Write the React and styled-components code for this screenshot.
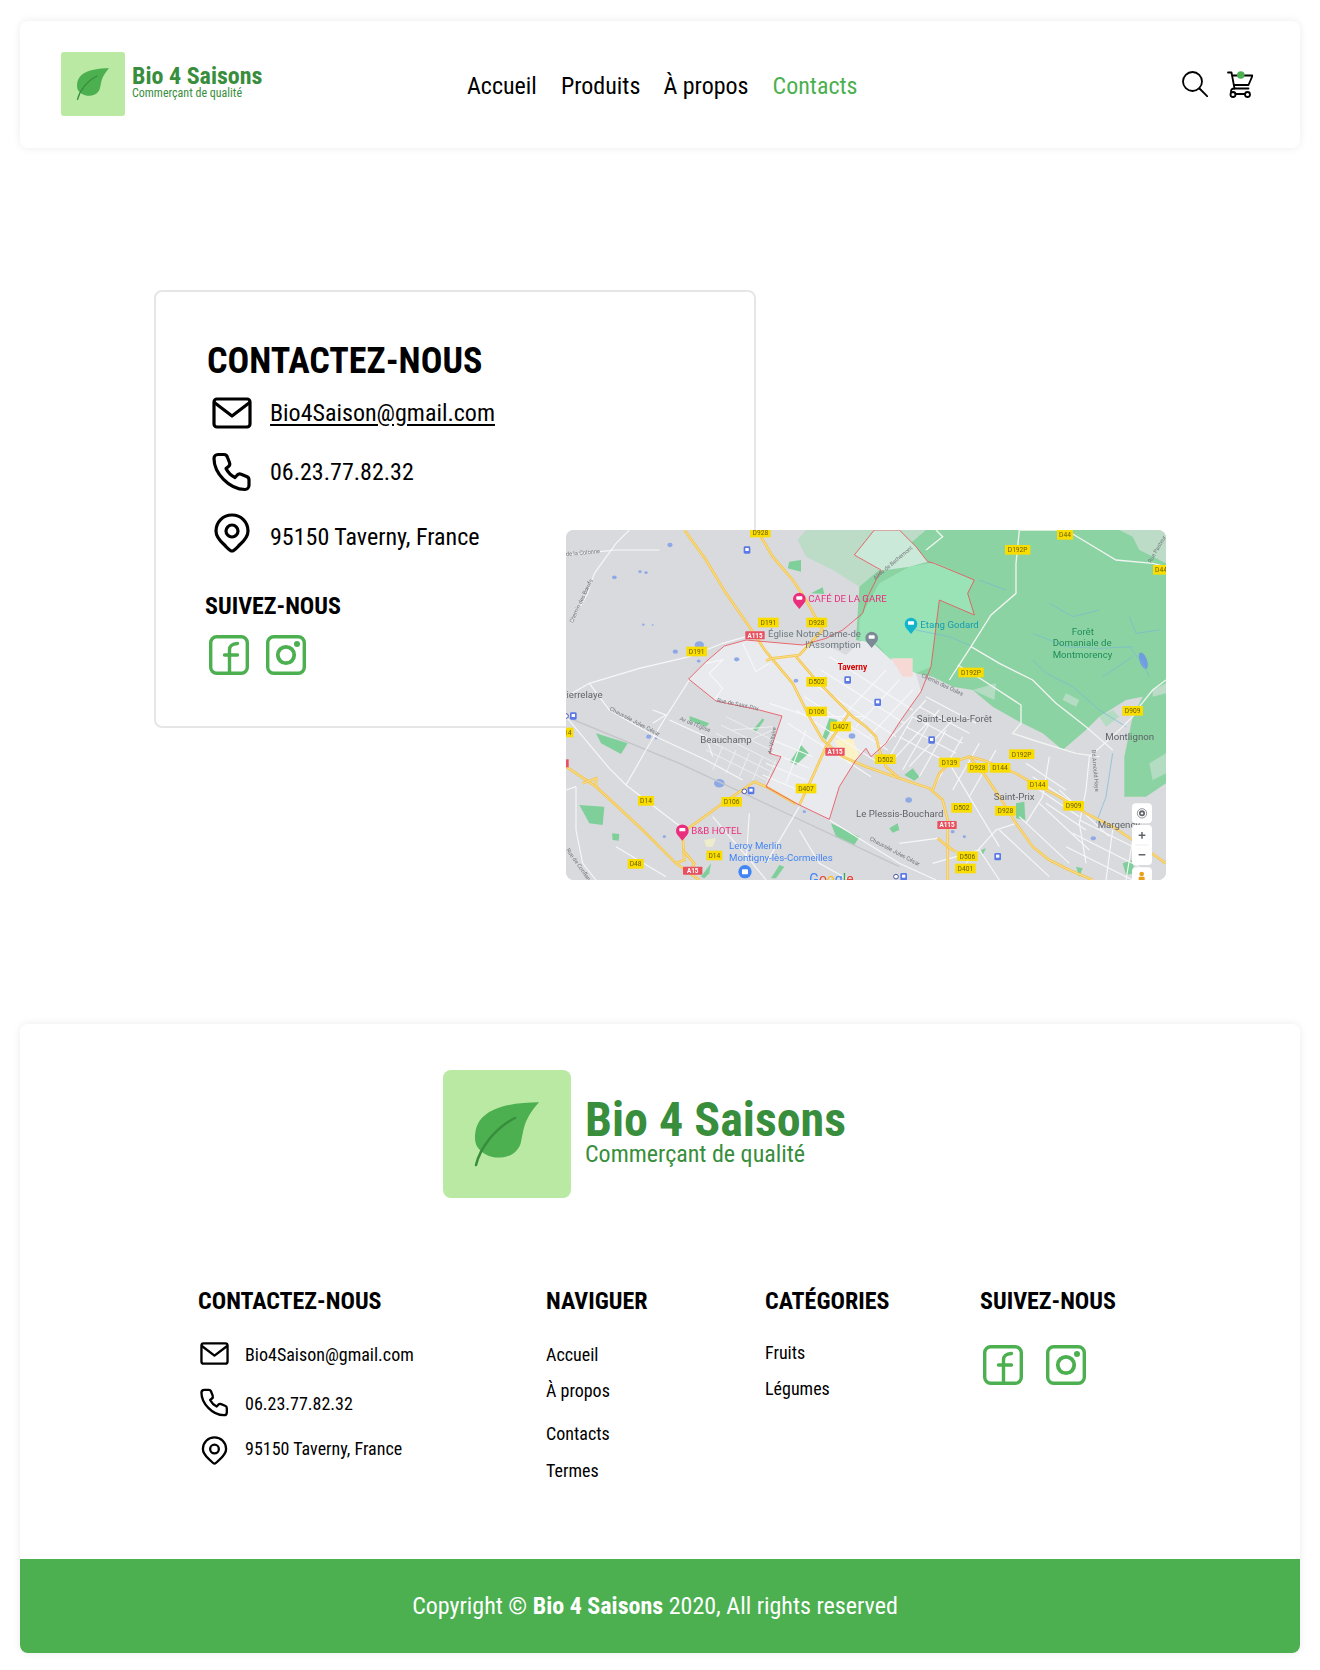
import React from "react";
import styled, { createGlobalStyle } from "styled-components";

const Global = createGlobalStyle`
  html, body { margin: 0; padding: 0; background: #fff; }
  body { font-family: "Roboto Condensed", Roboto, "Liberation Sans", sans-serif; font-stretch: 75%; color: #000; }
  * { box-sizing: border-box; }
`;

const Page = styled.div`
  width: 1320px;
  height: 1670px;
  padding: 21px 20px 0;
`;
const Card = styled.div`
  background: #fff;
  border-radius: 8px;
  box-shadow: 0 0 8px rgba(0, 0, 0, 0.08);
`;
const Header = styled(Card)`
  height: 127px;
  padding: 31px 47px 0 41px;
  display: flex;
  align-items: flex-start;
`;
const Brand = styled.div`
  display: flex;
  align-items: ${p => (p.$big ? "flex-start" : "center")};
  gap: ${p => (p.$big ? 14 : 7)}px;
  width: ${p => (p.$big ? "auto" : "406px")};
`;
const Tile = styled.div`
  width: ${p => p.$size}px;
  height: ${p => p.$size}px;
  background: #b9e9a3;
  border-radius: ${p => (p.$size > 100 ? 8 : 3)}px;
  flex: none;
`;
const BrandText = styled.div`
  color: #388e3c;
  display: flex;
  flex-direction: column;
  padding-top: ${p => (p.$big ? 28 : 0)}px;
  margin-top: ${p => (p.$big ? 0 : -4)}px;
`;
const BrandName = styled.div`
  font-weight: 700;
  font-size: ${p => (p.$big ? 48 : 24)}px;
  line-height: ${p => (p.$big ? 44 : 22)}px;
`;
const BrandSub = styled.div`
  font-size: ${p => (p.$big ? 24 : 12)}px;
  line-height: ${p => (p.$big ? 24 : 12)}px;
`;
const Nav = styled.nav`
  display: flex;
  gap: 24px;
  padding-top: 20px;
  flex: 1;
`;
const NavLink = styled.a`
  font-size: 24px;
  line-height: 28px;
  margin-left: ${p => p.$nudge || 0}px;
  color: ${p => (p.$active ? "#4caf50" : "#000")};
`;
const Tools = styled.div`
  display: flex;
  gap: 19px;
  padding-top: 19px;
`;
const Main = styled.section`
  position: relative;
  height: 876px;
  padding: 142px 0 0 134px;
`;
const ContactCard = styled.div`
  width: 602px;
  height: 438px;
  border: 2px solid #e6e6e6;
  border-radius: 8px;
  padding: 48px 0 0 51px;
  background: #fff;
`;
const BigTitle = styled.h1`
  margin: 0 0 5px;
  font-size: 36px;
  line-height: 42px;
  font-weight: 700;
`;
const Row = styled.div`
  display: flex;
  align-items: center;
  gap: ${p => p.$gap}px;
  height: ${p => p.$h}px;
  padding-left: ${p => p.$pad || 0}px;
  font-size: ${p => p.$fs}px;
`;
const Mail = styled.a`
  color: #000;
  text-decoration: underline;
  text-underline-offset: 3px;
`;
const FollowTitle = styled.h3`
  margin: 24px 0 15px -2px;
  font-size: 24px;
  line-height: 28px;
  font-weight: 700;
`;
const Socials = styled.div`
  display: flex;
  gap: ${p => p.$gap}px;
  padding-left: ${p => p.$pad}px;
`;
const MapBox = styled.div`
  position: absolute;
  left: 546px;
  top: 382px;
  width: 600px;
  height: 350px;
  border-radius: 8px;
  overflow: hidden;
  background: #d9dadd;
`;
const MapSvg = styled.svg`
  display: block;
  filter: blur(0.35px);
`;
const Footer = styled(Card)`
  height: 629px;
  overflow: hidden;
  display: flex;
  flex-direction: column;
`;
const FooterBrand = styled.div`
  display: flex;
  justify-content: flex-start;
  padding: 46px 0 0 423px;
`;
const Columns = styled.div`
  display: grid;
  grid-template-columns: 348px 219px 215px 1fr;
  padding: 89px 0 0 178px;
  flex: 1;
`;
const ColTitle = styled.h4`
  margin: 0;
  font-size: 24px;
  line-height: 28px;
  font-weight: 700;
`;
const Links = styled.div`
  display: flex;
  flex-direction: column;
  padding-top: ${p => p.$top}px;
`;
const FootLink = styled.a`
  font-size: 18px;
  line-height: 22px;
  margin-bottom: ${p => p.$mb}px;
  color: #000;
`;
const Copy = styled.div`
  background: #4caf50;
  height: 94px;
  color: #fff;
  display: flex;
  align-items: center;
  justify-content: center;
  font-size: 24px;
  padding-right: 10px;
  b { font-weight: 700; }
`;
const Glyph = styled.svg`
  flex: none;
  margin-bottom: ${p => p.$up || 0}px;
`;

const Leaf = ({ size }) => (
  <Tile $size={size}>
    <svg width={size} height={size} viewBox="0 0 128 128">
      <path d="M96 32.300C76 32.500 53 35 41 46c-7 6-9 14-9 22 0 8 4 12 10 16 5 3 11 4 16 3.500 10-.5 18-6.500 20-15.500 3-12 2-22 18-39.700z" fill="#4caf50" />
      <path d="M33 95c4-17 19-37 39-47" fill="none" stroke="#388e3c" strokeWidth="2.500" strokeLinecap="round" />
    </svg>
  </Tile>
);
const iconProps = { viewBox: "0 0 40 40", fill: "none", stroke: "#000", strokeWidth: 3.2, strokeLinejoin: "round", strokeLinecap: "round" };
const MailIcon = ({ s, up }) => (
  <Glyph width={s} height={s} $up={up} {...iconProps}>
    <rect x="2" y="6" width="36" height="28" rx="3" />
    <path d="M3 10l17 13 17-13" />
  </Glyph>
);
const PhoneIcon = ({ s, up }) => (
  <Glyph width={s} height={s} $up={up} {...iconProps}>
    <path d="M6 2.500h6c2 0 3 1 3.500 3l2 5c.6 1.600.2 3-1 4l-2.500 2c2 4 5 7 9 9l2.300-2.500c1-1 2.400-1.300 3.800-.8l5.500 2.300c1.500.6 2.400 1.700 2.400 3.300v5.500c0 2.300-1.700 4.200-4 4.200C17 37.500 2 21 2 6.500c0-2.300 1.700-4 4-4z" />
  </Glyph>
);
const PinIcon = ({ s, up }) => (
  <Glyph width={s} height={s} $up={up} {...iconProps}>
    <path d="M20 38c-2 0-4-2.500-8-6.500C7 27 4 22.500 4 18 4 9 11 2 20 2s16 7 16 16c0 4.500-3 9-8 13.500-4 4-6 6.500-8 6.500z" />
    <circle cx="20" cy="18" r="6" />
  </Glyph>
);
const Search = () => (
  <svg width="26" height="26" viewBox="0 0 26 26" fill="none" stroke="#000" strokeWidth="1.800" strokeLinecap="round">
    <circle cx="10.500" cy="10.500" r="9.500" />
    <path d="M17.500 17.500l8 8" />
  </svg>
);
const Cart = () => (
  <svg width="26" height="27" viewBox="0 0 26 27" fill="none" stroke="#000" strokeWidth="1.800" strokeLinejoin="round" strokeLinecap="round">
    <path d="M1 1.500h3.500l3 16h14M5.500 4.500h20l-4 9.500H7" />
    <path d="M7.500 17.500c-2.500 0-3.500 1-3.500 3" />
    <circle cx="6" cy="23.500" r="2.500" />
    <circle cx="20.500" cy="23.500" r="2.500" />
    <path d="M8.500 23h9.500" />
    <circle cx="13.800" cy="4" r="3.800" fill="#4caf50" stroke="none" />
  </svg>
);
const Fb = () => (
  <svg width="40" height="40" viewBox="0 0 40 40" fill="none" stroke="#4caf50" strokeWidth="3.400">
    <rect x="1.700" y="1.700" width="36.600" height="36.600" rx="6" />
    <path d="M20.500 38V15c0-4 2-6 8-6.500M15.500 20h13" strokeLinecap="round" />
  </svg>
);
const Ig = () => (
  <svg width="40" height="40" viewBox="0 0 40 40" fill="none" stroke="#4caf50" strokeWidth="3.400">
    <rect x="1.700" y="1.700" width="36.600" height="36.600" rx="6" />
    <circle cx="20" cy="20" r="8.200" strokeWidth="3.800" />
    <circle cx="31" cy="9" r="3" fill="#4caf50" stroke="none" />
  </svg>
);

/* ---------- map drawing, authored in a 1800 x 1050 space ---------- */
const pts = a => a.map(p => p.join(",")).join(" ");
const par = (x1, y1, x2, y2, dx, dy, n) =>
  Array.from({ length: n }, (_, i) => [[x1 + dx * i, y1 + dy * i], [x2 + dx * i, y2 + dy * i]]);

const forest = [[1080,0],[1800,0],[1800,760],[1740,800],[1675,800],[1675,680],[1700,560],[1730,500],[1680,510],[1600,560],[1560,600],[1490,660],[1430,610],[1360,575],[1280,530],[1220,480],[1160,470],[1100,440],[1050,430],[970,385],[920,340],[870,330],[880,170]];
const paleStrip = [[695,30],[720,0],[1080,0],[1070,60],[1030,110],[945,160],[880,170],[800,120],[720,80]];
const paleTop = [[1660,0],[1800,0],[1800,100],[1720,60],[1700,20]];
const paleRight = [[1760,480],[1800,460],[1800,490],[1760,500]];
const paleBits = [[[1220,480],[1290,460],[1285,510]],[[1500,490],[1540,510],[1530,530],[1490,510]],[[1600,560],[1640,540],[1660,560],[1620,590]],[[1750,700],[1800,670],[1800,730],[1760,750]]];
const lightForest = [[880,270],[900,230],[940,160],[1030,110],[1105,97],[1225,150],[1205,190],[1225,255],[1120,210],[1095,410],[1050,430],[970,385],[935,345],[880,330]];
const paleArea = [[865,75],[925,0],[1000,0],[1050,50],[1085,95],[1030,110],[945,122]];
const city = [[368,447],[420,395],[475,348],[540,330],[710,345],[780,345],[840,375],[900,320],[970,385],[1050,430],[1065,485],[1005,570],[960,640],[915,680],[900,655],[870,690],[820,770],[790,868],[690,820],[600,770],[645,680],[610,670],[648,558],[580,540],[450,513]];
const border = [[368,447],[420,395],[475,348],[540,330],[710,345],[780,325],[830,300],[890,250],[905,200],[920,170],[945,120],[865,75],[925,0],[1000,0],[1050,50],[1085,95],[1105,100],[1225,150],[1205,190],[1225,255],[1120,210],[1095,410],[1065,485],[1005,570],[960,640],[915,680],[900,655],[870,690],[820,770],[790,868],[690,820],[600,770],[645,680],[610,670],[648,558],[580,540],[450,513]];
const greens = [
  [[90,610],[185,640],[165,672],[105,640]],[[370,558],[430,580],[420,590],[372,572]],[[40,825],[115,830],[110,885],[70,880]],
  [[795,880],[880,920],[865,945],[810,920]],[[138,910],[160,912],[158,932],[140,930]],[[560,600],[590,565],[595,570],[570,605]],
  [[770,620],[790,565],[815,570],[795,600],[780,630]],[[672,695],[705,645],[728,670],[690,705]],[[670,95],[705,90],[705,125],[665,115]],
  [[735,190],[770,172],[775,192]],[[405,1040],[435,1000],[430,1030],[415,1045]],[[615,1045],[640,1005],[655,1010],[630,1045]],
  [[1015,735],[1040,715],[1060,740],[1045,752]],[[970,895],[995,880],[1000,900],[980,908]],[[1350,820],[1375,815],[1378,870],[1350,865]],
  [[1670,1000],[1700,990],[1705,1030],[1680,1035]],[[1245,960],[1260,955],[1250,975]],[[1530,1010],[1550,1015],[1540,1040]],
];
const blues = [[312,45,8],[145,142,7],[222,125,5],[240,128,5],[232,284,4],[260,285,3],[328,365,8],[400,345,14],[398,393,6],[512,388,8],[690,452,7],[248,620,8],[270,625,4],[460,760,16],[715,845,5],[858,618,10],[1028,810,10],[1160,905,6],[1582,925,8],[1195,920,5],[295,920,5]];
const mainRoads = [
  [[355,0],[420,90],[480,190],[550,290],[600,365],[680,460],[730,560],[770,630],[830,680],[900,710],[1000,745],[1090,775],[1130,810],[1145,870],[1145,1050]],
  [[585,20],[620,80],[680,150],[720,210],[770,300],[700,375],[620,385],[600,392]],
  [[690,380],[750,450],[800,500],[860,560],[900,590],[930,620],[940,660],[960,710],[1000,745]],
  [[700,825],[740,740],[780,650],[850,550]],
  [[0,710],[90,770],[230,900],[330,1000],[400,1050]],
  [[360,900],[470,820],[565,755],[600,770],[690,822]],
  [[350,920],[355,990],[330,1000]],[[350,960],[385,1000],[370,1030]],
  [[1100,780],[1120,730],[1150,700],[1210,680],[1250,690],[1350,730],[1400,760],[1480,800],[1560,850],[1640,890],[1700,930],[1800,1000]],
  [[1210,680],[1260,740],[1300,800],[1350,880],[1400,950],[1450,990],[1510,1020],[1580,1050]],
  [[1115,925],[1145,950],[1170,965]],[[50,760],[90,745],[90,770]],
];
const forestRoads = [
  [[1360,0],[1350,100],[1350,190],[1275,255],[1215,350],[1150,450]],
  [[1175,405],[1250,450],[1365,525],[1365,580],[1340,610],[1400,630],[1530,670],[1600,680]],
  [[1360,0],[1500,0],[1600,60],[1650,90],[1760,100],[1800,110]],
  [[1570,680],[1650,610],[1700,560],[1720,530],[1760,480],[1800,450]],
  [[1215,350],[1300,400],[1400,450],[1470,520],[1560,590],[1640,660]],
  [[1080,60],[1130,20],[1110,0]],
];
const streams = [
  [[1400,310],[1500,350],[1600,355],[1700,350]],[[1450,220],[1520,260],[1600,240]],[[1690,350],[1730,400],[1750,440]],
  [[1610,440],[1700,380]],[[1400,390],[1440,430],[1520,470],[1600,540],[1680,590]],[[1690,260],[1710,310],[1780,300]],
  [[1050,300],[1150,320],[1220,350]],[[1240,150],[1320,180]],[[1640,670],[1620,800],[1590,880]],
];
const cityRoads = [
  [[85,130],[150,40],[190,0]],[[0,75],[100,65],[150,60],[280,60]],[[15,280],[65,190],[85,130]],
  [[70,460],[220,415],[370,380],[470,340],[540,320]],[[0,500],[70,460],[130,540],[270,620],[420,690],[530,750]],
  [[0,560],[130,715],[180,765],[330,880],[360,900]],[[180,765],[240,660],[300,560],[370,450]],
  [[420,400],[470,390],[430,430],[470,475],[445,510]],[[530,340],[570,425],[610,400]],
  [[30,770],[30,900],[50,1000],[90,1050]],[[150,950],[300,1040]],[[440,860],[560,1000],[600,1050]],[[550,850],[540,1000]],
  [[700,900],[760,1000],[850,1050]],[[600,1000],[700,830]],[[790,870],[1000,1000],[1110,1050]],[[30,770],[0,780]],
  [[610,520],[730,560],[900,560]],[[260,540],[300,555],[260,580]],[[310,570],[420,620],[440,680]],
  [[1450,680],[1430,800],[1380,880]],[[1570,680],[1560,780],[1540,880],[1560,1000]],[[1200,1000],[1290,900],[1350,880]],
  [[1640,900],[1620,1050]],[[1700,930],[1680,1050]],[[1150,700],[1300,950]],[[1000,940],[1115,925]],[[1100,1000],[1240,960],[1300,1050]],
  ...par(790,380,1040,540,-25,40,6),...par(830,560,960,420,40,30,6),...par(620,630,740,680,-10,35,4),[[720,600],[660,760]],
  ...par(1000,620,1150,700,20,-30,5),...par(1040,560,960,700,50,20,6),...par(1300,900,1450,1040,60,-40,4),...par(1500,950,1700,1050,20,-40,3),
  ...par(1380,700,1500,780,20,40,4),
];
const faintRoads = [...par(420,660,600,750,15,-25,5),...par(470,650,440,720,40,10,5),[[500,600],[620,590]],[[530,640],[620,600]]];
const shields = [
  ["D928",583,8],["D191",607,278],["D928",752,278],["D191",392,365],["D502",752,456],["D106",752,545],["D407",824,590],["D407",720,776],
  ["D14",240,813],["D106",497,816],["D14",445,977],["D48",209,1002],["14",5,608],["D192P",1355,60],["D44",1497,15],["D44",1785,120],
  ["D192P",1215,428],["D909",1700,543],["D502",958,688],["D139",1150,698],["D928",1235,714],["D144",1302,714],["D192P",1367,673],
  ["D144",1415,765],["D909",1523,828],["D502",1187,834],["D928",1318,843],["D506",1204,979],["D401",1198,1016],
];
const reds = [["A115",567,316],["A115",807,665],["A115",1143,885],["A15",380,1022]];
const labels = [
  ["Église Notre-Dame-de",606,322,"#6b7a80"],["l'Assomption",718,355,"#6b7a80"],["Pierrelaye",-17,505,"#5f6368"],["Beauchamp",403,640,"#5f6368"],
  ["Le Plessis-Bouchard",870,860,"#5f6368"],["Saint-Leu-la-Forêt",1052,575,"#5f6368"],["Montlignon",1618,630,"#5f6368"],["Saint-Prix",1283,810,"#5f6368"],
  ["Margency",1595,893,"#5f6368"],["Forêt",1517,315,"#1e8e5a"],["Domaniale de",1460,349,"#1e8e5a"],["Montmorency",1460,383,"#1e8e5a"],
  ["Etang Godard",1063,293,"#129eaf"],["CAFÉ DE LA GARE",727,217,"#ea2e7e"],["B&B HOTEL",376,912,"#ea2e7e"],
  ["Leroy Merlin",489,958,"#4285f4"],["Montigny-lès-Cormeilles",489,993,"#4285f4"],
];
const tiny = [["de la Colonne",0,78,-5],["Chemin des Bœufs",20,280,-65],["Chaussée Jules César",130,540,28],["Av de l'Église",340,570,22],["Rue de Saint-Prix",452,515,12],["Av Voltaire",617,672,-80],["Chaussée Jules César",910,930,28],["Allée de Bethemont",928,150,-40],["Chemin des Oules",1065,440,25],["Rue de Conflans",0,960,55],["Bd Arnould Haye",1577,660,85],["Rue Pasteur",1755,100,-60]];
const stations = [[543,60],[845,450],[555,782],[22,558],[935,517],[1097,630],[1295,980],[1013,1040]];
const rings = [[535,784],[0,558],[990,1040]];
const pins = [[700,205,"#ea2e7e"],[349,900,"#ea2e7e"],[1035,280,"#12b5cb"],[917,322,"#7b8a94"]];
const googleLetters = [["G","#4285f4"],["o","#ea4335"],["o","#fbbc04"],["g","#4285f4"],["l","#34a853"],["e","#ea4335"]];

const MapDrawing = () => (
  <MapSvg width="600" height="350" viewBox="0 0 1800 1050" fontFamily="Roboto, sans-serif" fontStretch="100%">
    <rect width="1800" height="1050" fill="#d9dadd" />
    <polygon points={pts(paleStrip)} fill="#bcdcc8" />
    <polygon points={pts(forest)} fill="#8cd3a3" />
    <polygon points={pts(paleTop)} fill="#bcdcc8" />
    <polygon points={pts(paleRight)} fill="#bcdcc8" />
    {paleBits.map((g, i) => <polygon key={i} points={pts(g)} fill="#b4dcc2" />)}
    <polygon points={pts(city)} fill="#e9eaee" />
    <polygon points={pts(lightForest)} fill="#9ae3b6" />
    <polygon points={pts(paleArea)} fill="#cbe9d9" />
    <polygon points="975,385 1040,385 1040,440 1010,440" fill="#f6d8d4" />
    <polygon points="805,630 860,625 880,680 850,700 820,660" fill="#fbf3c6" />
    <polygon points="415,930 450,925 440,950 420,950" fill="#efeccb" />
    {greens.map((g, i) => <polygon key={i} points={pts(g)} fill="#7fcf9b" />)}
    {blues.map(([x, y, r], i) => <ellipse key={i} cx={x} cy={y} rx={r} ry={r * 0.8} fill="#8ea9e6" />)}
    <ellipse cx="1732" cy="392" rx="11" ry="26" fill="#6f9de0" transform="rotate(-20 1732 392)" />
    {streams.map((r, i) => <polyline key={i} points={pts(r)} fill="none" stroke="#74b8d6" strokeWidth="2" />)}
    <polyline points="0,560 340,700 640,840 1000,1010" fill="none" stroke="#c4c5c9" strokeWidth="4" />
    {faintRoads.map((r, i) => <polyline key={i} points={pts(r)} fill="none" stroke="#eeeef0" strokeWidth="3" />)}
    {cityRoads.map((r, i) => <polyline key={i} points={pts(r)} fill="none" stroke="#f7f7f9" strokeWidth="3.500" />)}
    {forestRoads.map((r, i) => <polyline key={i} points={pts(r)} fill="none" stroke="#f1f5f2" strokeWidth="4" />)}
    {mainRoads.map((r, i) => (
      <g key={i} fill="none">
        <polyline points={pts(r)} stroke="#f4c64e" strokeWidth="8" />
        <polyline points={pts(r)} stroke="#fbe6a0" strokeWidth="2.500" />
      </g>
    ))}
    <polygon points={pts(border)} fill="none" stroke="#e9505a" strokeWidth="2.500" />
    {tiny.map(([t, x, y, a]) => (
      <text key={t + x} x={x} y={y} fontSize="17" fill="#70757a" transform={`rotate(${a} ${x} ${y})`}>{t}</text>
    ))}
    {labels.map(([t, x, y, c]) => (
      <text key={t} x={x} y={y} fontSize="29" fill={c}>{t}</text>
    ))}
    <text x="815" y="420" fontSize="25" fontWeight="700" fill="#d50000">Taverny</text>
    {shields.map(([t, x, y], i) => {
      const w = t.length * 14 + 6;
      return (
        <g key={i}>
          <rect x={x - w / 2} y={y - 15} width={w} height="29" fill="#f9dc00" />
          <text x={x} y={y + 7} fontSize="20" textAnchor="middle" fill="#6b5d00">{t}</text>
        </g>
      );
    })}
    <rect x="-10" y="688" width="18" height="24" fill="#e8505f" />
    {reds.map(([t, x, y], i) => (
      <g key={i}>
        <rect x={x - 29} y={y - 12} width="58" height="24" rx="2" fill="#e8505f" />
        <text x={x} y={y + 7} fontSize="19" fontWeight="700" textAnchor="middle" fill="#fff">{t}</text>
      </g>
    ))}
    {stations.map(([x, y], i) => (
      <g key={i}>
        <rect x={x - 10} y={y - 11} width="20" height="22" rx="4" fill="#5a78e6" />
        <rect x={x - 5} y={y - 6} width="10" height="9" fill="#fff" />
      </g>
    ))}
    {rings.map(([x, y], i) => <circle key={i} cx={x} cy={y} r="7" fill="#fff" stroke="#4a55a8" strokeWidth="3" />)}
    {pins.map(([x, y, c], i) => (
      <g key={i}>
        <path d={`M${x} ${y + 32}l-15-18a19 19 0 1 1 30 0z`} fill={c} />
        <rect x={x - 9} y={y - 6} width="18" height="10" rx="2" fill="#fff" />
      </g>
    ))}
    <circle cx="537" cy="1025" r="20" fill="#4285f4" />
    <rect x="528" y="1018" width="18" height="15" rx="2" fill="#fff" />
    <text x="730" y="1062" fontSize="42">
      {googleLetters.map(([l, c], i) => <tspan key={i} fill={c}>{l}</tspan>)}
    </text>
    <g fill="#fff">
      <rect x="1698" y="820" width="60" height="60" rx="12" />
      <rect x="1698" y="885" width="60" height="120" rx="12" />
      <rect x="1698" y="1012" width="60" height="60" rx="12" />
    </g>
    <circle cx="1728" cy="850" r="9" fill="#5f6368" />
    <circle cx="1728" cy="850" r="14" fill="none" stroke="#5f6368" strokeWidth="2" />
    <circle cx="1728" cy="850" r="3.500" fill="#fff" />
    <path d="M1718 916h20M1728 906v20M1718 974h20" stroke="#5f6368" strokeWidth="4.500" />
    <path d="M1708 945h40" stroke="#e6e6e6" strokeWidth="2" />
    <circle cx="1727" cy="1032" r="7" fill="#e8a01c" />
    <rect x="1718" y="1040" width="18" height="14" rx="3" fill="#e8a01c" />
  </MapSvg>
);

const links = {
  nav: [["Accueil", 14], ["À propos", 21], ["Contacts", 15], ["Termes", 0]],
  cat: [["Fruits", 14], ["Légumes", 0]],
};

export default function App() {
  return (
    <Page>
      <Global />
      <Header>
        <Brand>
          <Leaf size={64} />
          <BrandText>
            <BrandName>Bio 4 Saisons</BrandName>
            <BrandSub>Commerçant de qualité</BrandSub>
          </BrandText>
        </Brand>
        <Nav>
          <NavLink>Accueil</NavLink>
          <NavLink>Produits</NavLink>
          <NavLink $nudge={-1}>À propos</NavLink>
          <NavLink $active>Contacts</NavLink>
        </Nav>
        <Tools>
          <Search />
          <Cart />
        </Tools>
      </Header>
      <Main>
        <ContactCard>
          <BigTitle>CONTACTEZ-NOUS</BigTitle>
          <Row $gap={18} $h={51} $pad={5} $fs={24}><MailIcon s={40} /><Mail>Bio4Saison@gmail.com</Mail></Row>
          <Row $gap={18} $h={68} $pad={5} $fs={24}><PhoneIcon s={40} /><span>06.23.77.82.32</span></Row>
          <Row $gap={18} $h={62} $pad={5} $fs={24}><PinIcon s={40} up={8} /><span>95150 Taverny, France</span></Row>
          <FollowTitle>SUIVEZ-NOUS</FollowTitle>
          <Socials $gap={17} $pad={2}><Fb /><Ig /></Socials>
        </ContactCard>
        <MapBox><MapDrawing /></MapBox>
      </Main>
      <Footer>
        <FooterBrand>
          <Brand $big>
            <Leaf size={128} />
            <BrandText $big>
              <BrandName $big>Bio 4 Saisons</BrandName>
              <BrandSub $big>Commerçant de qualité</BrandSub>
            </BrandText>
          </Brand>
        </FooterBrand>
        <Columns>
          <div>
            <ColTitle>CONTACTEZ-NOUS</ColTitle>
            <Links $top={15}>
              <Row $gap={16} $h={48} $pad={2} $fs={18}><MailIcon s={29} up={2} /><span>Bio4Saison@gmail.com</span></Row>
              <Row $gap={16} $h={50} $pad={2} $fs={18}><PhoneIcon s={29} up={2} /><span>06.23.77.82.32</span></Row>
              <Row $gap={16} $h={40} $pad={2} $fs={18}><PinIcon s={29} up={-4} /><span>95150 Taverny, France</span></Row>
            </Links>
          </div>
          <div>
            <ColTitle>NAVIGUER</ColTitle>
            <Links $top={29}>
              {links.nav.map(([t, m]) => <FootLink key={t} $mb={m}>{t}</FootLink>)}
            </Links>
          </div>
          <div>
            <ColTitle>CATÉGORIES</ColTitle>
            <Links $top={27}>
              {links.cat.map(([t, m]) => <FootLink key={t} $mb={m}>{t}</FootLink>)}
            </Links>
          </div>
          <div>
            <ColTitle>SUIVEZ-NOUS</ColTitle>
            <Links $top={30}><Socials $gap={23} $pad={3}><Fb /><Ig /></Socials></Links>
          </div>
        </Columns>
        <Copy><span>Copyright © <b>Bio 4 Saisons</b> 2020, All rights reserved</span></Copy>
      </Footer>
    </Page>
  );
}
